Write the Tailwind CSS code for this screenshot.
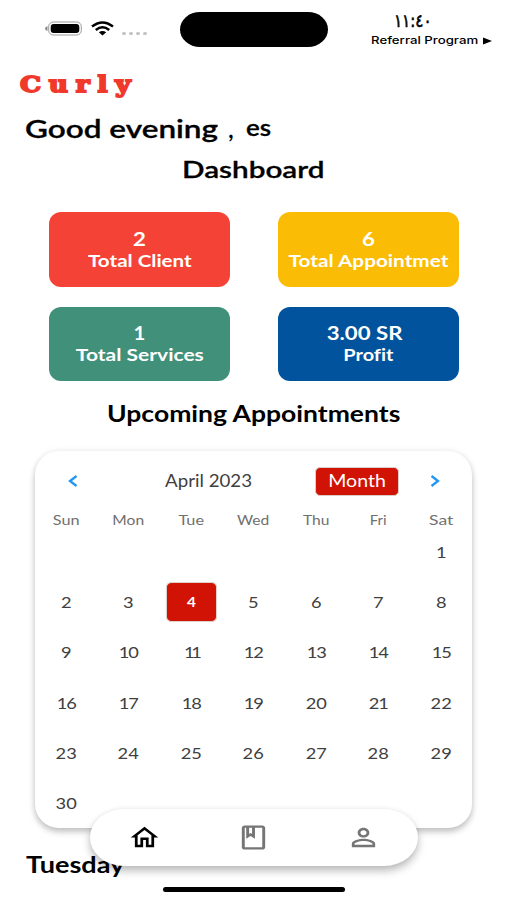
<!DOCTYPE html>
<html lang="en">
<head>
<meta charset="utf-8">
<title>Curly</title>
<script src="https://cdn.jsdelivr.net/npm/@tailwindcss/browser@4"></script>
</head>
<body class="bg-white">
<div class="relative flex h-[900px] w-[507px] flex-col overflow-hidden bg-white font-['Lato',sans-serif] text-black">

  <!-- Status bar -->
  <header class="flex h-[66px] shrink-0 items-start pl-[45px]">
    <div class="flex w-[135px] items-center pt-[20px]">
      <svg class="h-[16px] w-[38px]" viewBox="0 0 38 16"><path d="M2.500 6v5Q0 10 0 8.500T2.500 6Z" fill="#888"/><rect x="3.700" y="2" width="32.600" height="13" rx="4.500" fill="#fff" stroke="#999" stroke-width="1"/><rect x="5.700" y="4" width="28.600" height="9" rx="3" fill="#000"/></svg>
      <svg class="ml-[8px] h-[15px] w-[23px]" viewBox="0 0 23 15" fill="none" stroke="#000" stroke-width="2.500"><path d="M1 5.600Q11.500-2.600 22 5.600"/><path d="M4.800 9Q11.500 3.500 18.200 9"/><path d="M7.800 11.200Q11.500 8.600 15.200 11.200L11.500 14.500Z" fill="#000" stroke="none"/></svg>
      <div class="mt-[11px] ml-[8px] flex gap-[3px]"><i class="h-[3px] w-[4px] rounded-full bg-[#c4c4c4]"></i><i class="h-[3px] w-[4px] rounded-full bg-[#c4c4c4]"></i><i class="h-[3px] w-[4px] rounded-full bg-[#c4c4c4]"></i><i class="h-[3px] w-[4px] rounded-full bg-[#c4c4c4]"></i></div>
    </div>
    <div class="mt-[12px] h-[35px] w-[148px] rounded-[20px/17.500px] bg-black"></div>
    <div class="ml-[43px] flex w-[122px] flex-col pt-[11px]">
      <span class="ml-[23px] h-[20px] w-[36px] text-[18px] leading-[20px] font-medium whitespace-nowrap font-['DejaVu_Sans',sans-serif]"><span class="inline-block origin-left scale-x-[0.840] [-webkit-text-stroke:0.600px_#000]">١١:٤٠</span></span>
      <span class="flex h-[19px] items-center text-[10.500px] leading-[19px] font-medium whitespace-nowrap font-['Inter',sans-serif]"><span class="w-[112px]"><span class="inline-block origin-left scale-x-[1.260]">Referral Program</span></span><svg class="h-[8px] w-[9px] shrink-0" viewBox="0 0 9 8"><path d="M0 .5 9 4 0 7.500Z"/></svg></span>
    </div>
  </header>

  <!-- Brand and greeting -->
  <div class="flex h-[43px] shrink-0 items-start pl-[20px] text-[22px] leading-[36px] font-bold text-[#f0382b] font-['DejaVu_Serif',serif]"><span class="inline-block origin-left scale-x-[1.200] tracking-[6.500px] [-webkit-text-stroke:1.800px_#f0382b]">Curly</span></div>
  <div class="flex h-[38px] shrink-0 items-center pl-[25px] text-[25px] leading-[38px] font-semibold whitespace-pre"><span class="w-[203px]"><span class="inline-block origin-left scale-x-[1.260] [-webkit-text-stroke:0.300px_#000]">Good evening</span></span><span class="w-[18px]">,</span><span class="inline-block origin-left scale-x-[1.180] text-[22px] [-webkit-text-stroke:0.300px_#000]">es</span></div>
  <h1 class="flex h-[44px] shrink-0 items-center justify-center text-[23px] font-semibold"><span class="inline-block scale-x-[1.290] [-webkit-text-stroke:0.300px_#000]">Dashboard</span></h1>

  <!-- Totals -->
  <section class="mt-[21px] grid shrink-0 grid-cols-2 gap-x-[48px] gap-y-[20px] pr-[48px] pl-[49px] text-center text-[17px] leading-[21px] font-bold text-white">
    <div class="flex h-[74.500px] flex-col items-center justify-center rounded-[12px] bg-[#f44336] pt-[2px]"><span class="inline-block scale-x-[1.200] text-[18.500px]">2</span><span class="inline-block scale-x-[1.210]">Total Client</span></div>
    <div class="flex h-[74.500px] flex-col items-center justify-center rounded-[12px] bg-[#fbbc05] pt-[2px]"><span class="inline-block scale-x-[1.200] text-[18.500px]">6</span><span class="inline-block scale-x-[1.220] whitespace-nowrap">Total Appointmet</span></div>
    <div class="flex h-[74.500px] flex-col items-center justify-center rounded-[12px] bg-[#41907a]"><span class="inline-block scale-x-[1.100] text-[18.500px]">1</span><span class="inline-block scale-x-[1.235]">Total Services</span></div>
    <div class="flex h-[74.500px] flex-col items-center justify-center rounded-[12px] bg-[#00539c]"><span class="mr-[7px] inline-block scale-x-[1.200] text-[18.500px]">3.00 SR</span><span class="inline-block scale-x-[1.170] [font-variant-ligatures:none]">Profit</span></div>
  </section>

  <h2 class="mt-[11px] flex h-[42px] shrink-0 items-center justify-center text-[22px] font-bold"><span class="inline-block scale-x-[1.205] whitespace-nowrap">Upcoming Appointments</span></h2>

  <!-- Calendar -->
  <section class="mx-[35px] mt-[17px] h-[377px] shrink-0 rounded-[24px] bg-white text-[#404040] shadow-[0_4px_6px_rgba(0,0,0,0.220),0_0_7px_rgba(0,0,0,0.070)]">
    <div class="flex h-[60px] items-center">
      <svg class="ml-[33px] h-[12px] w-[10px]" viewBox="0 0 10 12" fill="none" stroke="#2196f3" stroke-width="2.300"><path d="M8.500 1 2 6l6.500 5"/></svg>
      <div class="ml-[52px] flex w-[158px] justify-center text-[17px]"><span class="inline-block scale-x-[1.100] whitespace-nowrap">April 2023</span></div>
      <div class="ml-[27px] flex h-[29px] w-[84px] items-center justify-center rounded-[5px] border border-[#d9ccc9] bg-[#d01304] text-[17px] text-white"><span class="inline-block scale-x-[1.150]">Month</span></div>
      <svg class="ml-[31px] h-[12px] w-[10px]" viewBox="0 0 10 12" fill="none" stroke="#2196f3" stroke-width="2.300"><path d="m1.500 1 6.500 5-6.500 5"/></svg>
    </div>
    <div class="grid h-[16px] grid-cols-7 items-center text-center text-[13px] leading-[18px] text-[#707070]">
      <span class="scale-x-[1.250]">Sun</span><span class="scale-x-[1.200]">Mon</span><span class="scale-x-[1.250]">Tue</span><span class="scale-x-[1.200]">Wed</span><span class="scale-x-[1.200]">Thu</span><span class="scale-x-[1.150]">Fri</span><span class="scale-x-[1.350]">Sat</span>
    </div>
    <div class="grid auto-rows-[50.200px] grid-cols-7 items-center text-center text-[16px] *:scale-x-[1.140]">
      <span class="col-start-7">1</span>
      <span>2</span><span>3</span><span class="mx-auto flex h-[40px] w-[45px] items-center justify-center rounded-[5px] border border-[#dfd2cb] bg-[#d01304] text-[13.500px] font-bold text-white">4</span><span>5</span><span>6</span><span>7</span><span>8</span>
      <span>9</span><span class="tracking-[-1px]">10</span><span class="tracking-[-3px]">11</span><span class="tracking-[-1px]">12</span><span class="tracking-[-1px]">13</span><span class="tracking-[-1px]">14</span><span class="tracking-[-1px]">15</span>
      <span class="tracking-[-1px]">16</span><span class="tracking-[-1px]">17</span><span class="tracking-[-1px]">18</span><span class="tracking-[-1px]">19</span><span>20</span><span class="tracking-[-1px]">21</span><span>22</span>
      <span>23</span><span>24</span><span>25</span><span>26</span><span>27</span><span>28</span><span>29</span>
      <span>30</span>
    </div>
  </section>

  <h3 class="mt-[20px] h-[34px] shrink-0 pl-[26px] text-[22px] leading-[34px] font-bold"><span class="inline-block origin-left scale-x-[1.230]">Tuesday</span></h3>

  <!-- Floating navigation -->
  <nav class="absolute top-[809px] left-[90px] grid h-[57px] w-[328px] grid-cols-3 place-items-center rounded-[34px/28.500px] bg-white shadow-[0_5px_8px_rgba(0,0,0,0.260),0_0_5px_rgba(0,0,0,0.060)]">
    <svg class="h-[29px] w-[33px]" viewBox="0 0 24 24" preserveAspectRatio="none"><path d="M12 5.690l5 4.500V18h-2v-6H9v6H7v-7.810l5-4.500M12 3L2 12h3v8h6v-6h2v6h6v-8h3L12 3z"/></svg>
    <svg class="h-[29px] w-[35px]" viewBox="0 0 24 24" preserveAspectRatio="none" fill="#757575"><path d="M18 2H6c-1.100 0-2 .9-2 2v16c0 1.100.9 2 2 2h12c1.100 0 2-.9 2-2V4c0-1.100-.9-2-2-2zM9 4h2v5l-1-.75L9 9V4zm9 16H6V4h1v9l3-2.250L13 13V4h5v16z"/></svg>
    <svg class="h-[29px] w-[35px]" viewBox="0 0 24 24" preserveAspectRatio="none" fill="#757575"><path d="M12 5.900c1.160 0 2.100.94 2.100 2.100s-.94 2.100-2.100 2.100S9.900 9.160 9.900 8s.94-2.100 2.100-2.100m0 9c2.970 0 6.100 1.460 6.100 2.100v1.100H5.900V17c0-.64 3.130-2.100 6.100-2.100M12 4C9.790 4 8 5.790 8 8s1.790 4 4 4 4-1.790 4-4-1.790-4-4-4zm0 9c-2.670 0-8 1.340-8 4v3h16v-3c0-2.660-5.330-4-8-4z"/></svg>
  </nav>
  <div class="absolute top-[887px] left-[163px] h-[5px] w-[182px] rounded-full bg-black"></div>
</div>
</body>
</html>
